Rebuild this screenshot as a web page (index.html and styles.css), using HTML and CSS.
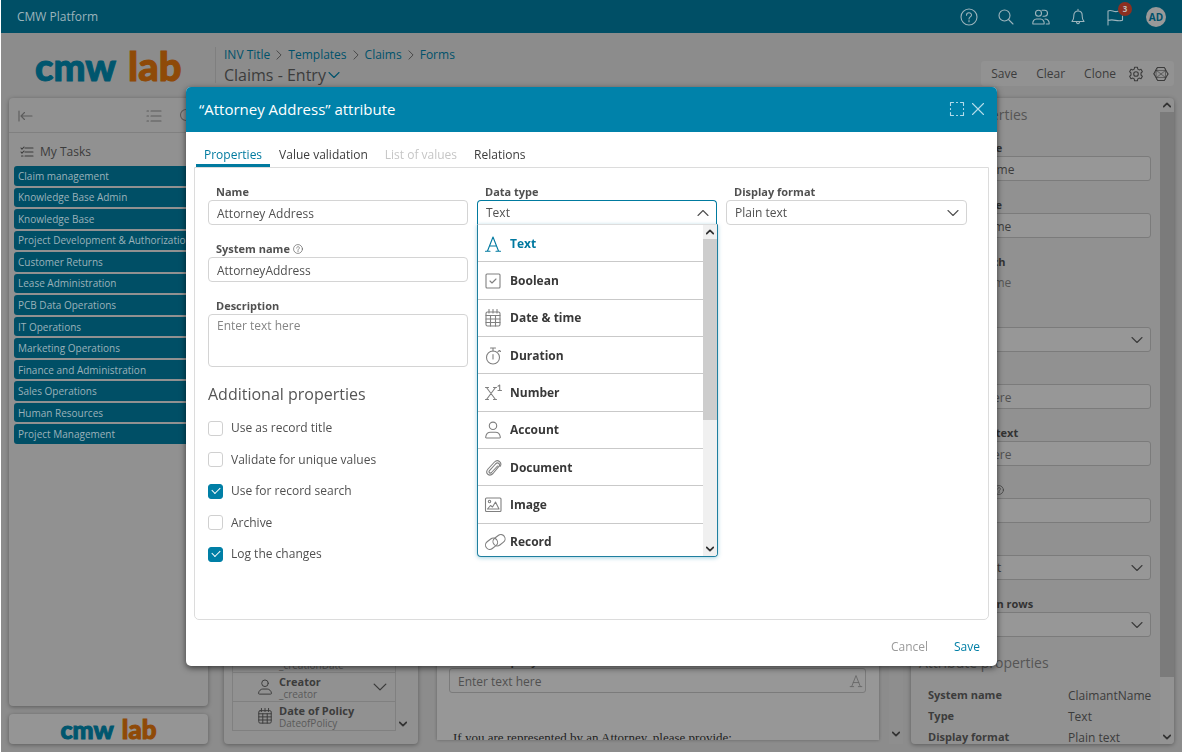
FILE: index.html
```html
<!DOCTYPE html>
<html lang="en">
<head>
<meta charset="utf-8">
<title>CMW Platform</title>
<link rel="stylesheet" href="styles.css">
</head>
<body>
<svg class="sprite" aria-hidden="true">
  <symbol id="down" viewBox="0 0 12 12"><path d="M1 3.500l5 5 5-5"/></symbol>
  <symbol id="right" viewBox="0 0 12 12"><path d="M3.500 1L8.500 6l-5 5"/></symbol>
  <symbol id="calendar" viewBox="0 0 18 18"><rect x="2" y="3" width="14" height="14" rx="1.500"/><path d="M2 6.500h14M2 10h14M2 13.500h14M6.500 6.500V17M11.500 6.500V17M5 .5V4M9 .5V4M13 .5V4"/></symbol>
  <symbol id="person" viewBox="0 0 18 18"><circle cx="9" cy="4.800" r="3.700"/><path d="M2.500 17c-.6 0-.9-.4-.8-1 .4-2.800 2.600-4.700 4.800-4.700h5c2.200 0 4.400 1.900 4.800 4.700 .1.600-.2 1-.8 1z"/></symbol>
  <symbol id="letter" viewBox="0 0 18 18"><path d="M3.500 16L9 2l5.500 14M5.500 11h7M1.500 16.200h4.500M12 16.200h4.500"/></symbol>
  <symbol id="question" viewBox="0 0 18 18"><circle cx="9" cy="9" r="8"/><path d="M6.500 7.200c0-3.200 5-3.200 5-.2 0 1.900-2.500 1.900-2.500 4M9 12.500v1.300"/></symbol>
</svg>

<header class="topbar">
  <span>CMW Platform</span>
  <nav class="topbar-actions">
    <button class="icon-btn" aria-label="Help"><svg class="icon i18"><use href="#question"/></svg></button>
    <button class="icon-btn search" aria-label="Search"><svg class="icon i18" viewBox="0 0 18 18"><circle cx="7.500" cy="7.500" r="5.500"/><path d="M11.500 11.500l4.500 4.500"/></svg></button>
    <button class="icon-btn" aria-label="Users"><svg class="icon i18" viewBox="0 0 18 18"><circle cx="6.500" cy="5.200" r="3"/><path d="M.8 16c-.3-3.200 1.600-5 3.700-5h4c2.100 0 4 1.800 3.700 5zM10 2.200h2.500a3 3 0 0 1 0 6H11M13 11c2.500 0 4.500 1.800 4.200 5h-3"/></svg></button>
    <button class="icon-btn" aria-label="Notifications"><svg class="icon i18" viewBox="0 0 18 18"><path d="M3 13.500c2-2 1.800-3.500 1.800-6 0-6 8.400-6 8.400 0 0 2.500-.2 4 1.800 6zM7.500 13.500c0 3 3 3 3 0M9 1.300v1.500"/></svg></button>
    <button class="icon-btn flag" aria-label="Flags"><svg class="icon i18" viewBox="0 0 18 18"><path d="M2 17V3c4-1.800 5.500 1.800 10 .3M16.500 8v4.300c-6 2-8-2-14.500.2"/></svg><span class="badge">3</span></button>
    <button class="avatar">AD</button>
  </nav>
</header>

<div class="page-head">
  <div class="logo"><span class="logo-a">cmw</span><span class="logo-b">lab</span></div>
  <div class="titles">
    <nav class="crumbs">
      <a href="#">INV Title</a><svg class="icon i10"><use href="#right"/></svg>
      <a href="#">Templates</a><svg class="icon i10"><use href="#right"/></svg>
      <a href="#">Claims</a><svg class="icon i10"><use href="#right"/></svg>
      <a href="#">Forms</a>
    </nav>
    <h1 class="page-title">Claims - Entry <svg class="icon i12"><use href="#down"/></svg></h1>
  </div>
  <div class="toolbar">
    <button class="tool">Save</button>
    <button class="tool">Clear</button>
    <button class="tool">Clone</button>
    <button class="tool" aria-label="Settings"><svg class="icon i16" viewBox="0 0 16 16"><circle cx="8" cy="8" r="2.300"/><path d="M6.600 1.200h2.800l.4 1.900 1.300.8 1.900-.6 1.400 2.400-1.400 1.300v2l1.400 1.300-1.400 2.400-1.900-.6-1.300.8-.4 1.900H6.600l-.4-1.900-1.300-.8-1.900.6-1.400-2.400L3 9V7L1.600 5.700 3 3.300l1.900.6 1.300-.8z"/></svg></button>
    <button class="tool" aria-label="Structure"><svg class="icon i16" viewBox="0 0 16 16"><path stroke-width="1" d="M4.500 1.500h7L15 8l-3.500 6.500h-7L1 8z"/><path stroke-width=".6" d="M3.500 4.500h9v7h-9zM3.500 4.500l9 7M12.500 4.500l-9 7M4.500 1.500l-1 3M11.500 1.500l1 3M4.500 14.500l-1-3M11.500 14.500l1-3M1 8l2.500-3.500M1 8l2.500 3.500M15 8l-2.500-3.500M15 8l-2.500 3.500"/></svg></button>
  </div>
</div>

<main class="workspace">
  <aside class="sidebar">
    <nav class="card tasks">
      <div class="tasks-tools">
        <svg class="icon i16" viewBox="0 0 16 16"><path d="M2 3v10M4 8h11M7.500 4.500L4 8l3.500 3.500"/></svg>
        <span class="tasks-right">
          <svg class="icon i16" viewBox="0 0 16 16"><path d="M5 3h10M5 8h10M5 13h10M1 3h1.500M1 8h1.500M1 13h1.500"/></svg>
          <svg class="icon i16" viewBox="0 0 16 16"><circle cx="7" cy="7" r="5.500"/><path d="M11 11l4 4"/></svg>
        </span>
      </div>
      <h2 class="tasks-title"><svg class="icon i14" viewBox="0 0 14 14"><path d="M5 3h8M5 7h8M5 11h8M1 3l1 1.200L4 2M1 7l1 1.200L4 6M1.500 11h1.500"/></svg>My Tasks</h2>
      <ul class="task-list">
        <li><a href="#">Claim management</a></li>
        <li><a href="#">Knowledge Base Admin</a></li>
        <li><a href="#">Knowledge Base</a></li>
        <li><a href="#">Project Development &amp; Authorization</a></li>
        <li><a href="#">Customer Returns</a></li>
        <li><a href="#">Lease Administration</a></li>
        <li><a href="#">PCB Data Operations</a></li>
        <li><a href="#">IT Operations</a></li>
        <li><a href="#">Marketing Operations</a></li>
        <li><a href="#">Finance and Administration</a></li>
        <li><a href="#">Sales Operations</a></li>
        <li><a href="#">Human Resources</a></li>
        <li><a href="#">Project Management</a></li>
      </ul>
    </nav>
    <div class="card brand"><div class="logo small"><span class="logo-a">cmw</span><span class="logo-b">lab</span></div></div>
  </aside>

  <section class="card palette">
    <ul class="attrs">
      <li class="attr"><svg class="icon i16"><use href="#calendar"/></svg><span class="attr-text"><b>Creation date</b><small>_creationDate</small></span></li>
      <li class="attr"><svg class="icon i16"><use href="#person"/></svg><span class="attr-text"><b>Creator</b><small>_creator</small></span><svg class="icon i14"><use href="#down"/></svg></li>
      <li class="attr"><svg class="icon i16"><use href="#calendar"/></svg><span class="attr-text"><b>Date of Policy</b><small>DateofPolicy</small></span></li>
    </ul>
    <svg class="icon i8 bold palette-arrow"><use href="#down"/></svg>
  </section>

  <section class="canvas">
    <div class="canvas-field">
      <label for="company">Your Company</label>
      <div class="control"><input id="company" class="dim-input" placeholder="Enter text here"><svg class="icon i14 canvas-a"><use href="#letter"/></svg></div>
    </div>
    <p class="canvas-note">If you are represented by an Attorney, please provide:</p>
  </section>
  <div class="canvas-scroll"><svg class="icon i8 bold"><use href="#down"/></svg></div>

  <aside class="card props">
    <div class="props-body">
      <h2 class="props-title">Text properties</h2>
      <div class="prop"><label for="p1">Display name</label><input id="p1" class="dim-input" value="Claimant Name"></div>
      <div class="prop"><label for="p2">System name</label><input id="p2" class="dim-input" value="ClaimantName"></div>
      <div class="prop"><b>Record search</b><span class="prop-plain">ClaimantName</span></div>
      <div class="prop"><label for="p4">Access</label><div class="control"><select id="p4" class="dim-input"><option>Editable</option></select><svg class="icon i12"><use href="#down"/></svg></div></div>
      <div class="prop"><label for="p5">Tooltip</label><input id="p5" class="dim-input" placeholder="Enter text here"></div>
      <div class="prop"><label for="p6">Placeholder text</label><input id="p6" class="dim-input" placeholder="Enter text here"></div>
      <div class="prop"><label for="p7">Input mask <svg class="icon i10"><use href="#question"/></svg></label><input id="p7" class="dim-input"></div>
      <div class="prop"><label for="p8">Format</label><div class="control"><select id="p8" class="dim-input"><option>Multiline text</option></select><svg class="icon i12"><use href="#down"/></svg></div></div>
      <div class="prop"><label for="p9">Text height in rows</label><div class="control"><select id="p9" class="dim-input"><option>Auto</option></select><svg class="icon i12"><use href="#down"/></svg></div></div>
      <h2 class="props-title second">Attribute properties</h2>
      <dl class="facts">
        <dt>System name</dt><dd>ClaimantName</dd>
        <dt>Type</dt><dd>Text</dd>
        <dt>Display format</dt><dd>Plain text</dd>
      </dl>
    </div>
    <div class="props-scroll">
      <span class="sb-end"><svg class="icon i8 bold flip"><use href="#down"/></svg></span>
      <span class="props-thumb"></span>
      <span class="props-rest"><svg class="icon i8 bold"><use href="#down"/></svg></span>
    </div>
  </aside>
</main>

<div class="overlay">
  <section class="modal" role="dialog" aria-labelledby="modal-title">
    <header class="modal-head">
      <h2 id="modal-title">“Attorney Address” attribute</h2>
      <div class="modal-icons">
        <button class="icon-btn" aria-label="Full screen"><svg class="icon i16" viewBox="0 0 16 16"><path d="M1.500 4.500v-3h3M11.500 1.500h3v3M14.500 11.500v3h-3M4.500 14.500h-3v-3M1.500 7.500v1M14.500 7.500v1M7.500 1.500h1M7.500 14.500h1"/></svg></button>
        <button class="icon-btn" aria-label="Close"><svg class="icon i14" viewBox="0 0 14 14"><path d="M1.500 1.500l11 11M12.500 1.500l-11 11"/></svg></button>
      </div>
    </header>
    <div class="tabs" role="tablist">
      <button class="tab active" role="tab">Properties</button>
      <button class="tab" role="tab">Value validation</button>
      <button class="tab" role="tab" disabled>List of values</button>
      <button class="tab" role="tab">Relations</button>
    </div>
    <form class="panel">
      <div class="col">
        <div class="field"><label for="name">Name</label><input id="name" class="input" value="Attorney Address"></div>
        <div class="field"><label for="sys">System name <svg class="icon i10"><use href="#question"/></svg></label><input id="sys" class="input" value="AttorneyAddress"></div>
        <div class="field"><label for="desc">Description</label><textarea id="desc" class="input area" placeholder="Enter text here"></textarea></div>
        <h3 class="group-title">Additional properties</h3>
        <div class="checks">
          <label class="check"><input type="checkbox">Use as record title</label>
          <label class="check"><input type="checkbox">Validate for unique values</label>
          <label class="check"><input type="checkbox" checked>Use for record search</label>
          <label class="check"><input type="checkbox">Archive</label>
          <label class="check"><input type="checkbox" checked>Log the changes</label>
        </div>
      </div>
      <div class="col">
        <div class="field"><label for="dtype">Data type</label>
          <div class="control">
            <select id="dtype" class="input open"><option>Text</option></select><svg class="icon i12 flip"><use href="#down"/></svg>
            <div class="menu">
              <ul class="options" role="listbox">
                <li class="selected" role="option"><svg class="icon i18"><use href="#letter"/></svg>Text</li>
                <li role="option"><svg class="icon i18" viewBox="0 0 18 18"><rect x="2" y="2" width="14" height="14" rx="1"/><path d="M6 9l2 2L12 7"/></svg>Boolean</li>
                <li role="option"><svg class="icon i18"><use href="#calendar"/></svg>Date &amp; time</li>
                <li role="option"><svg class="icon i18" viewBox="0 0 18 18"><circle cx="9" cy="10.500" r="6.500"/><path d="M6.500 1h5M9 1v3M9 7.500V12M14 4.500l1.500-1 1 1"/></svg>Duration</li>
                <li role="option"><svg class="icon i18" viewBox="0 0 18 18"><path d="M2.500 3.500l9 12M11.500 3.500l-9 12M1.500 3.500h3M9.500 3.500h3M1.500 15.500h3M9.500 15.500h3M14 2.200L15.700 1v5.500M14 6.500h3.500"/></svg>Number</li>
                <li role="option"><svg class="icon i18"><use href="#person"/></svg>Account</li>
                <li role="option"><svg class="icon i18" viewBox="0 0 18 18"><path d="M13.500 7l-6 6.500c-1.500 1.500-3.300-.2-2-1.800L11.500 5c2.500-2.500 5.300.3 3.200 2.700L9 14.500c-3.600 3.700-8.500-.3-5-4.500L10.500 3c3.200-3.300 8 .5 5.700 4.300"/></svg>Document</li>
                <li role="option"><svg class="icon i18" viewBox="0 0 18 18"><rect x="1.500" y="2" width="15.500" height="13.500" rx="1"/><circle cx="5.500" cy="5.500" r="1.200"/><path d="M3.500 13l3-3.500 2 1.500L11.500 6l3.500 7z"/></svg>Image</li>
                <li role="option"><svg class="icon link-icon" viewBox="0 0 22 18"><rect x="1" y="6.500" width="13" height="8.500" rx="4.200" transform="rotate(-38 7.500 10.700)"/><rect x="8.500" y="3" width="13" height="8.500" rx="4.200" transform="rotate(-38 15 7.200)"/></svg>Record</li>
              </ul>
              <div class="scroll">
                <span class="sb-end"><svg class="icon i8 bold flip"><use href="#down"/></svg></span>
                <span class="thumb"></span>
                <span class="sb-end last"><svg class="icon i8 bold"><use href="#down"/></svg></span>
              </div>
            </div>
          </div>
        </div>
      </div>
      <div class="col">
        <div class="field"><label for="fmt">Display format</label><div class="control"><select id="fmt" class="input"><option>Plain text</option></select><svg class="icon i12"><use href="#down"/></svg></div></div>
      </div>
    </form>
    <footer class="modal-foot">
      <button class="text-btn">Cancel</button>
      <button class="text-btn primary">Save</button>
    </footer>
  </section>
</div>
</body>
</html>
```

FILE: styles.css
```css
* { box-sizing: border-box; }
body {
  margin: 0;
  height: 100vh;
  overflow: hidden;
  display: flex;
  flex-direction: column;
  border-left: 1px solid #fff;
  background: #8c8c8c;
  color: #3c3c3c;
  font: 12px/16px "Open Sans", "Noto Sans", sans-serif;
}
ul, dl, dd, p, h1, h2, h3 { margin: 0; padding: 0; list-style: none; font-weight: 400; }
a { color: inherit; text-decoration: none; }
button, input, select, textarea { font: inherit; color: inherit; margin: 0; }
button { background: none; border: 0; padding: 0; }

.sprite { display: none; }
.icon { fill: none; stroke: currentColor; stroke-width: 1.1; stroke-linecap: round; stroke-linejoin: round; flex: none; }
.i8 { width: 8px; height: 8px; }
.i10 { width: 10px; height: 10px; }
.i12 { width: 12px; height: 12px; }
.i14 { width: 14px; height: 14px; }
.i16 { width: 16px; height: 16px; }
.i18 { width: 18px; height: 18px; }
.bold { stroke-width: 2.6; color: #333; }
.flip { transform: rotate(180deg); }
.icon-btn { display: flex; }

.topbar {
  height: 33px;
  flex: none;
  display: flex;
  align-items: center;
  justify-content: space-between;
  padding: 1px 16px 0;
  background: #004f66;
  color: #9cb4bc;
}
.topbar-actions { display: flex; align-items: center; gap: 19px; }
.search { margin-right: -2px; }
.flag { position: relative; }
.badge {
  position: absolute;
  left: 12px;
  top: -6px;
  width: 14px;
  height: 14px;
  border-radius: 50%;
  background: #8c2f20;
  color: #bbb;
  font: 700 8px/14px "Open Sans", sans-serif;
  text-align: center;
}
.avatar {
  width: 20px;
  height: 20px;
  margin-left: 3px;
  border-radius: 50%;
  background: #999;
  color: #00506a;
  font-size: 10px;
  font-weight: 700;
}

.page-head { height: 65px; flex: none; display: flex; padding: 13px 8px 0 34px; }
.logo {
  width: 180px;
  display: flex;
  align-items: baseline;
  gap: 12px;
  font: 900 40px/40px Lato, sans-serif;
  white-space: nowrap;
}
.logo.small { width: auto; justify-content: center; gap: 8px; font-size: 26px; line-height: 30px; }
.logo-a { color: #00566e; font-size: 38px; -webkit-text-stroke: 1px #00566e; }
.logo-b { color: #8f4a08; -webkit-text-stroke: 1px #8f4a08; }
.small .logo-a { font-size: 25px; }
.titles { border-left: 1px solid #7f7f7f; padding-left: 8px; height: 36px; margin-top: 1px; }
.crumbs { display: flex; align-items: center; gap: 4px; color: #00526b; }
.crumbs .icon { color: #444; }
.page-title { display: flex; align-items: center; gap: 2px; font-size: 16px; line-height: 24px; }
.page-title .icon { color: #00526b; }
.toolbar {
  margin: 15px 0 0 auto;
  height: 25px;
  display: flex;
  align-items: center;
  padding: 1px 5px 0 10px;
  border-radius: 3px;
  background: #929292;
}
.tool { display: flex; margin-right: 19px; }
.tool:nth-child(3) { margin-right: 12px; }
.tool:nth-child(4) { margin-right: 9px; }
.tool:nth-child(5) { margin-right: 0; }

.workspace { flex: 1; min-height: 0; display: flex; padding: 0 8px 8px; }
.card { background: #919191; border-radius: 4px; box-shadow: 0 1px 4px rgba(0, 0, 0, 0.35); overflow: hidden; }
.sidebar { width: 199px; display: flex; flex-direction: column; gap: 8px; }
.tasks { flex: 1; }
.tasks-tools {
  display: flex;
  justify-content: space-between;
  align-items: center;
  height: 35px;
  padding: 2px 13px 0 8px;
  border-bottom: 1px solid #808080;
  color: #5c5c5c;
}
.tasks-right { display: flex; gap: 17px; }
.tasks-title { display: flex; align-items: center; gap: 6px; height: 33px; padding: 4px 11px 0; font-size: 12px; }
.task-list { display: grid; grid-auto-rows: 1fr; gap: 2px; height: 278px; padding-left: 5px; color: #9bb2ba; font-size: 10px; white-space: nowrap; }
.task-list li { display: flex; align-items: center; padding: 0 4px; border-radius: 3px 0 0 3px; background: #004f66; }
.brand { height: 30px; background: #959595; }

.palette { width: 194px; margin-left: 16px; padding: 0 8px 13px; display: flex; align-items: flex-end; gap: 3px; }
.attrs { width: 164px; border: 1px solid #808080; border-top: 0; }
.attr { display: flex; align-items: center; gap: 6px; height: 29px; padding: 0 8px 0 24px; border-top: 1px solid #808080; }
.attr-text { flex: 1; display: flex; flex-direction: column; }
.attr b { font-size: 11px; line-height: 13px; }
.attr small { font-size: 10px; line-height: 12px; color: #5a5a5a; }
.palette-arrow { margin-bottom: 3px; }

.canvas {
  flex: 1;
  margin: 0 10px 4px 19px;
  padding: 0 13px 0 12px;
  overflow: hidden;
  display: flex;
  flex-direction: column;
  justify-content: flex-end;
  background: #979797;
  box-shadow: 0 0 3px rgba(0, 0, 0, 0.3);
}
.canvas-field label { display: block; padding-left: 8px; font-size: 11px; font-weight: 700; line-height: 15px; }
.canvas-note { height: 11px; margin-top: 36px; padding-left: 4px; font: 13px/18px "Liberation Serif", serif; color: #222; white-space: nowrap; }
.canvas-scroll { width: 14px; margin-right: 8px; display: flex; align-items: flex-end; justify-content: center; padding-bottom: 6px; background: #8e8e8e; }

.control { position: relative; display: grid; align-items: center; }
.control > .input, .control > .dim-input, .control > .icon { grid-area: 1 / 1; }
.control > .icon { justify-self: end; margin-right: 8px; pointer-events: none; }
.control > .canvas-a { margin-right: 3px; color: #666; }
.dim-input {
  width: 100%;
  height: 25px;
  padding: 1px 8px 0;
  border: 1px solid #7b7b7b;
  border-radius: 3px;
  background: #979797;
  appearance: none;
  outline: 0;
}
.dim-input::placeholder { color: #505050; opacity: 1; }

.props { width: 263px; display: flex; }
.props-body { flex: 1; min-width: 0; padding: 8px 9px 0 8px; white-space: nowrap; }
.props-title { padding-left: 9px; margin-bottom: 16px; font-size: 14px; line-height: 18px; color: #555; }
.props-title.second { padding: 1px 0 0; margin: 0 0 15px; }
.prop { height: 57px; }
.prop label, .prop b { display: flex; align-items: center; gap: 4px; padding-left: 9px; font-size: 11px; font-weight: 700; line-height: 16px; color: #333; }
.prop-plain { display: block; padding: 5px 9px; color: #555; }
.facts { display: grid; grid-template-columns: 140px 1fr; row-gap: 5px; padding-left: 9px; }
.facts dt { font-size: 11px; font-weight: 700; }
.facts dd { padding-top: 1px; margin-bottom: -1px; }
.props-scroll { width: 14px; display: flex; flex-direction: column; }
.props-thumb { flex: 1; background: #7b7b7b; }
.props-rest { height: 67px; display: flex; align-items: flex-end; justify-content: center; padding-bottom: 3px; background: #939393; }

.sb-end { height: 14px; display: flex; align-items: center; justify-content: center; }

.overlay { position: fixed; inset: 0; display: flex; padding: 87px 185px 86px 186px; }
.modal {
  flex: 1;
  min-width: 0;
  display: flex;
  flex-direction: column;
  border-radius: 5px;
  background: #fff;
  color: #505050;
  box-shadow: 0 2px 6px rgba(0, 0, 0, 0.6);
}
.modal-head {
  height: 45px;
  flex: none;
  display: flex;
  align-items: center;
  justify-content: space-between;
  padding: 0 12px 1px 13px;
  border-radius: 5px 5px 0 0;
  background: #0082aa;
  color: #fff;
}
.modal-head h2 { font-size: 15px; line-height: 20px; }
.modal-icons { display: flex; align-items: center; gap: 6px; color: #b5dcea; }
.tabs { display: flex; height: 35px; padding: 8px 10px 0; }
.tab { height: 27px; padding: 5px 8px 0; margin-right: 1px; border-bottom: 3px solid transparent; color: #3c3c3c; }
.tab.active { color: #007a9f; border-color: #007a9f; }
.tab:disabled { color: #c6c6c6; }
.panel {
  flex: 1;
  min-height: 0;
  margin: 0 8px;
  padding: 16px 21px 0 13px;
  display: grid;
  grid-template-columns: 260fr 240fr 241fr;
  gap: 9px;
  border: 1px solid #dcdcdc;
  border-radius: 0 0 5px 5px;
}
.field { margin-bottom: 16px; }
.field label { display: flex; align-items: center; gap: 3px; padding-left: 8px; font-size: 11px; font-weight: 700; line-height: 16px; }
.input {
  display: block;
  width: 100%;
  height: 25px;
  padding: 1px 8px 0;
  border: 1px solid #d4d4d4;
  border-radius: 4px;
  background: #fff;
  appearance: none;
  outline: 0;
  resize: none;
}
.input::placeholder { color: #858585; opacity: 1; }
.area { height: 53px; padding-top: 3px; }
.input.open { border-color: #007a9f; border-bottom-color: #ddd; border-radius: 4px 4px 0 0; }
.group-title { font-size: 16px; line-height: 22px; color: #555; }
.checks { display: flex; flex-direction: column; justify-content: space-between; height: 142px; margin-top: 15px; }
.check { display: flex; align-items: center; gap: 8px; }
.check input { width: 15px; height: 15px; border: 1px solid #d0d0d0; border-radius: 3px; background: #fff; appearance: none; }
.check input:checked { border-color: #007fa6; background: #007fa6; display: grid; place-items: center; }
.check input:checked::before {
  content: "";
  width: 7px;
  height: 4px;
  margin-bottom: 3px;
  border: solid #fff;
  border-width: 0 0 1px 1px;
  transform: rotate(-45deg);
}

.menu {
  position: absolute;
  top: 24px;
  left: 0;
  right: -1px;
  z-index: 1;
  height: 333px;
  display: flex;
  overflow: hidden;
  border: 1px solid #1f7f9f;
  border-top-color: #ddd;
  border-radius: 0 0 4px 4px;
  background: #fff;
  box-shadow: 0 1px 4px rgba(0, 130, 170, 0.35);
}
.options { flex: 1; display: grid; grid-auto-rows: 1fr; height: 336px; color: #383838; font-weight: 700; }
.options li { display: flex; align-items: center; gap: 8px; padding: 1px 0 0 6px; border-bottom: 1px solid #c9c9c9; }
.options .icon { color: #808080; }
.options .selected, .options .selected .icon { color: #0079a0; }
.options .link-icon { width: 22px; height: 18px; margin-right: -4px; }
.scroll { width: 14px; display: flex; flex-direction: column; background: #f0f0f0; }
.thumb { height: 181px; background: #cdcdcd; }
.last { margin-top: auto; }

.modal-foot { height: 46px; flex: none; display: flex; align-items: center; justify-content: flex-end; gap: 26px; padding: 8px 17px 0; }
.text-btn { color: #9a9a9a; }
.primary { color: #007fa6; }
```
